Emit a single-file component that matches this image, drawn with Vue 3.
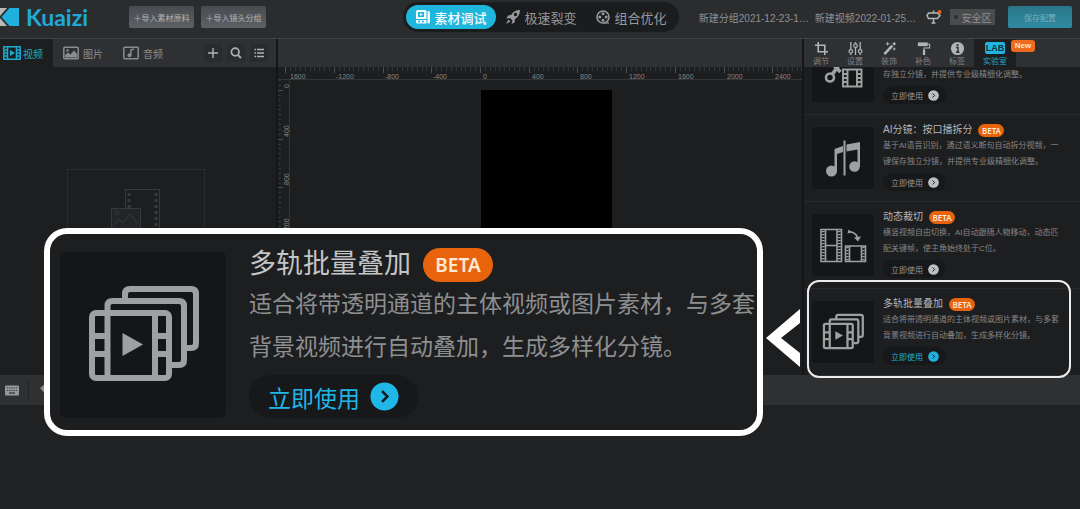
<script setup>
const modes = [
  { label: '素材调试', icon: 'm-debug', active: true },
  { label: '极速裂变', icon: 'm-rocket' },
  { label: '组合优化', icon: 'm-reel' },
]

const mediaTabs = [
  { label: '视频', icon: 't-video', active: true },
  { label: '图片', icon: 't-image' },
  { label: '音频', icon: 't-audio' },
]

const mediaTools = [
  { label: '添加', icon: 'b-plus' },
  { label: '搜索', icon: 'b-search' },
  { label: '列表', icon: 'b-list' },
]

const toolTabs = [
  { label: '调节', icon: 'p-crop' },
  { label: '设置', icon: 'p-sliders' },
  { label: '装饰', icon: 'p-wand' },
  { label: '补色', icon: 'p-roller' },
  { label: '标签', icon: 'p-info' },
]

const cards = [
  { icon: 'c-split', lines: ['存独立分镜，并提供专业级精细化调整。'] },
  {
    icon: 'c-music',
    title: 'AI分镜：按口播拆分',
    lines: ['基于AI语音识别，通过语义断句自动拆分视频，一', '键保存独立分镜，并提供专业级精细化调整。'],
  },
  {
    icon: 'c-resize',
    title: '动态裁切',
    lines: ['横竖视频自由切换，AI自动跟随人物移动，动态匹', '配关键帧，使主角始终处于C位。'],
  },
  {
    icon: 'c-stack',
    title: '多轨批量叠加',
    lines: ['适合将带透明通道的主体视频或图片素材，与多套', '背景视频进行自动叠加，生成多样化分镜。'],
    active: true,
  },
]

const STEP = 48.7
const hTicks = []
for (let i = -40; i <= 66; i++) {
  hTicks.push({ p: Math.round(202 + (i * STEP) / 10), major: i % 10 === 0 })
}
const hLabels = []
for (let k = -4; k <= 6; k++) {
  hLabels.push({ x: k === -4 ? 12 : Math.round(202 + k * STEP) + (k < 0 ? 2 : 3), t: k === -4 ? '1600' : String(k * 400) })
}
const vTicks = []
for (let i = -2; i <= 58; i++) {
  vTicks.push({ p: Math.round(10 + (i * STEP) / 10), major: i % 10 === 0 })
}
const vLabels = []
for (let k = 0; k <= 5; k++) vLabels.push({ y: Math.round(9 + k * STEP) - 1, t: String(k * 400) })
</script>

<template>
  <div class="app">
    <svg class="defs" aria-hidden="true">
      <symbol id="m-debug" viewBox="0 0 16 16">
        <path fill="currentColor" fill-rule="evenodd" d="M2.5 1H10a1.5 1.5 0 0 1 1.500 1.500V10H1V2.500A1.500 1.500 0 0 1 2.500 1zM3 3v5h6V3z" />
        <path fill="currentColor" d="M5 4l3 1.500L5 7zM1 11h10.500v3.500h-9A1.500 1.500 0 0 1 1 13zM12.500 2h1A1.500 1.500 0 0 1 15 3.500V13a1.500 1.500 0 0 1-1.500 1.500h-1z" />
        <circle cx="4" cy="12.500" r="1" fill="#1fb6dd" /><circle cx="8" cy="12.500" r="1" fill="#1fb6dd" />
      </symbol>
      <symbol id="m-rocket" viewBox="0 0 16 16">
        <path fill="currentColor" fill-rule="evenodd" d="M15 1c-4 0-7 1.500-9 5L3 6.500 1.500 9.500 5 9l2.500 2.500L6.500 15l3-1.500.5-3.500c3.500-2 5-5 5-9zM10.500 3.800a1.700 1.700 0 1 1 0 3.400 1.700 1.700 0 0 1 0-3.400z" />
        <path fill="currentColor" d="M3.500 10.500L1 15l4.500-2.500z" />
      </symbol>
      <symbol id="m-reel" viewBox="0 0 16 16">
        <circle cx="8" cy="8" r="6" fill="none" stroke="currentColor" stroke-width="1.600" />
        <circle cx="8" cy="4.800" r="1.500" fill="currentColor" /><circle cx="8" cy="11.200" r="1.500" fill="currentColor" />
        <circle cx="4.800" cy="8" r="1.500" fill="currentColor" /><circle cx="11.200" cy="8" r="1.500" fill="currentColor" />
        <path d="M9 14h5" stroke="currentColor" stroke-width="1.200" />
      </symbol>
      <symbol id="t-video" viewBox="0 0 18 14">
        <path d="M.8.8h16.400v12.400H.800zM4.500 1v12M13.500 1v12M1 4h3.500M1 7h3.500M1 10h3.500M13.500 4H17M13.500 7H17M13.500 10H17" fill="none" stroke="currentColor" stroke-width="1.500" />
        <path d="M7 4l5 3-5 3z" fill="currentColor" />
      </symbol>
      <symbol id="t-image" viewBox="0 0 16 14">
        <rect x=".8" y="1.300" width="14.400" height="11.400" rx="1" fill="none" stroke="currentColor" stroke-width="1.500" />
        <path d="M2 11.500V9l3-2.500 2.500 2 3.500-4 3 3.500v3.500z" fill="currentColor" /><circle cx="4.500" cy="4.500" r="1.200" fill="currentColor" />
      </symbol>
      <symbol id="t-audio" viewBox="0 0 16 14">
        <rect x=".8" y="1.300" width="14.400" height="11.400" rx="1" fill="none" stroke="currentColor" stroke-width="1.500" />
        <path d="M7.800 9V4l3-1" fill="none" stroke="currentColor" stroke-width="1.400" /><circle cx="6.500" cy="9.200" r="2" fill="currentColor" />
      </symbol>
      <symbol id="b-plus" viewBox="0 0 16 16"><path d="M8 3v10M3 8h10" stroke="currentColor" stroke-width="1.400" /></symbol>
      <symbol id="b-search" viewBox="0 0 16 16"><circle cx="7.200" cy="7" r="3.800" fill="none" stroke="currentColor" stroke-width="1.700" /><path d="M10 10l3 3.200" stroke="currentColor" stroke-width="1.900" /></symbol>
      <symbol id="b-list" viewBox="0 0 16 16"><path d="M6 4.500h7M6 8h7M6 11.500h7M3.500 4.500H5M3.500 8H5M3.500 11.500H5" stroke="currentColor" stroke-width="1.300" /></symbol>
      <symbol id="p-crop" viewBox="0 0 16 16"><path d="M4.500 1v10.500H15M1 4.500h10.500V15" fill="none" stroke="currentColor" stroke-width="1.700" /></symbol>
      <symbol id="p-sliders" viewBox="0 0 16 16">
        <path d="M3 1v8M3 13v2M8 1v2M8 7v8M13 1v8M13 13v2" stroke="currentColor" stroke-width="1.400" />
        <g fill="none" stroke="currentColor" stroke-width="1.300"><circle cx="3" cy="11" r="1.900" /><circle cx="8" cy="5" r="1.900" /><circle cx="13" cy="11" r="1.900" /></g>
      </symbol>
      <symbol id="p-wand" viewBox="0 0 16 16">
        <path d="M2.500 14L11 5" stroke="currentColor" stroke-width="2.800" /><path d="M12 4l2-2" stroke="currentColor" stroke-width="2.800" />
        <path d="M6 1v4M4 3h4M13 7v3M11.500 8.500h3" stroke="currentColor" stroke-width="1" />
      </symbol>
      <symbol id="p-roller" viewBox="0 0 16 16">
        <path d="M2 1.500h10.500v4H2z" fill="currentColor" /><path d="M12 3.500h2.500v4H8.500V10" fill="none" stroke="currentColor" stroke-width="1.200" /><path d="M7.300 9.500h2.500V15H7.300z" fill="currentColor" />
      </symbol>
      <symbol id="p-info" viewBox="0 0 16 16">
        <circle cx="8" cy="8" r="7" fill="currentColor" /><circle cx="8" cy="4.300" r="1.200" fill="#2f3033" /><path d="M6.500 7h2v5M6.300 12h3.800" fill="none" stroke="#2f3033" stroke-width="1.500" />
      </symbol>
      <symbol id="c-split" viewBox="0 0 62 62">
        <g fill="none" stroke="currentColor">
          <circle cx="18" cy="37.500" r="4" stroke-width="2.600" /><circle cx="18" cy="20" r="4" stroke-width="2.600" />
          <path d="M20.500 34l8-11M20.500 24l8 8" stroke-width="3.600" />
          <path d="M31 29.500h18.500v17H31zM35.500 30v16M45 30v16M31 34h4M31 38h4M31 42h4M45 34h4M45 38h4M45 42h4" stroke-width="1.900" />
        </g>
      </symbol>
      <symbol id="c-music" viewBox="0 0 62 62">
        <g fill="currentColor"><circle cx="19.500" cy="44" r="5.500" /><circle cx="42.500" cy="39.500" r="5.300" /><path d="M22.500 22l8.500-3v6l-6 2v17h-2.500zM34.500 17.500L48 15v25h-2.500V22.500l-11 2zM31.500 13.500h2v35h-2z" /></g>
      </symbol>
      <symbol id="c-resize" viewBox="0 0 62 62">
        <g fill="none" stroke="currentColor">
          <path d="M9 15.500h20.500v32H9zM13.500 16v31M25 16v31M13.500 31.500H25" stroke-width="1.600" />
          <path d="M11.300 17v30M27.300 17v30" stroke-width="2.800" stroke-dasharray="1.200 1.800" />
          <path d="M33.500 32h20v15.500h-20zM37.500 32v15.500M49.500 32v15.500" stroke-width="1.600" />
          <path d="M35.500 33v14M51.500 33v14" stroke-width="2.400" stroke-dasharray="1.200 1.800" />
          <path d="M37 17.500q7 1 8.500 6" stroke-width="1.700" />
        </g>
        <path d="M42 23.500l7-1-3 5zM35.500 19.500l1-4 3 3z" fill="currentColor" />
      </symbol>
      <symbol id="c-stack" viewBox="0 0 166 166">
        <g fill="none" stroke="currentColor" stroke-width="6">
          <rect x="32" y="61" width="77" height="65" rx="4" />
          <path d="M47.500 61v65M95 61v65M32 84h15M32 102h15M95 84h14M95 102h14" />
          <path d="M47.500 61v-7q0-5 5-5H119q5 0 5 5v54q0 5-5 5h-8" />
          <path d="M65 49v-7q0-5 5-5h61q5 0 5 5v49q0 5-5 5h-8" />
        </g>
        <path d="M62.500 81v23L83 92.500z" fill="currentColor" />
      </symbol>
      <symbol id="go" viewBox="0 0 30 30">
        <circle cx="15" cy="15" r="14.500" fill="currentColor" /><path d="M12.500 9.500l5.500 5.500-5.500 5.500" fill="none" stroke="#17181a" stroke-width="2.600" />
      </symbol>
    </svg>

    <header class="top">
      <div class="top-left">
        <div class="brand">
          <svg class="brand-mark" viewBox="0 0 20 18"><path d="M0 0h7L0 8zM0 10l7 8H0z" fill="#b9babb" /><path d="M9.500 0H19v18H9.500L1.500 9z" fill="#1fb0dd" /></svg>
          <span class="brand-name">Kuaizi</span>
        </div>
        <button class="import">＋导入素材原料</button>
        <button class="import">＋导入镜头分组</button>
      </div>
      <nav class="modes">
        <button v-for="m in modes" :key="m.label" class="mode" :class="{ on: m.active }">
          <svg><use :href="'#' + m.icon" /></svg>{{ m.label }}
        </button>
      </nav>
      <div class="top-right">
        <span class="crumb">新建分组2021-12-23-1…</span>
        <span class="crumb">新建视频2022-01-25…</span>
        <svg class="sign" viewBox="0 0 16 16"><path d="M2.500 4h9l2.500 2.500-2.500 3h-9l-1.500-3zM7.500 1.500V4M7.500 9.500V14M5.500 14h4" fill="none" stroke="#b4b5b6" stroke-width="1.500" /><circle cx="13.500" cy="3" r="2" fill="#e0661c" /></svg>
        <button class="safe"><i></i>安全区</button>
        <button class="save">保存配置</button>
      </div>
    </header>

    <main class="work">
      <section class="media">
        <div class="bar media-bar">
          <button v-for="t in mediaTabs" :key="t.label" class="media-tab" :class="{ on: t.active }">
            <svg><use :href="'#' + t.icon" /></svg>{{ t.label }}
          </button>
          <div class="media-tools">
            <button v-for="b in mediaTools" :key="b.icon" :aria-label="b.label"><svg><use :href="'#' + b.icon" /></svg></button>
          </div>
        </div>
        <div class="media-body">
          <div class="drop">
            <svg viewBox="0 0 52 64" fill="none" stroke="#37393b">
              <path d="M15.500 22V1.500h34v40H33" />
              <path d="M19 5v16M46 5v36" stroke-width="3" stroke-dasharray="3 3" />
              <rect x="1.500" y="20.500" width="29" height="22" fill="#222427" /><path d="M3 38l6-7 4 4 7-9 8 10" /><circle cx="7" cy="25" r="2" />
            </svg>
          </div>
        </div>
      </section>

      <section class="stage">
        <div class="bar"></div>
        <svg class="ruler-h">
          <rect v-for="t in hTicks" :key="t.p" :x="t.p" y="0" width="1" :height="t.major ? 6 : 4" :fill="t.major ? '#4c4e51' : '#353638'" />
          <text v-for="l in hLabels" :key="l.t" :x="l.x" y="12">{{ l.t }}</text>
        </svg>
        <div class="stage-row">
          <svg class="ruler-v">
            <rect v-for="t in vTicks" :key="t.p" x="0" :y="t.p" :width="t.major ? 5 : 3" height="1" :fill="t.major ? '#4c4e51' : '#353638'" />
            <text v-for="l in vLabels" :key="l.t" :transform="`translate(11 ${l.y}) rotate(-90)`">{{ l.t }}</text>
          </svg>
          <div class="canvas-area"><div class="canvas"></div></div>
        </div>
      </section>

      <section class="lab">
        <div class="bar tool-bar">
          <button v-for="t in toolTabs" :key="t.label" class="tool"><svg><use :href="'#' + t.icon" /></svg>{{ t.label }}</button>
          <button class="tool on"><span class="lab-mark">LAB</span>实验室</button>
          <span class="new">New</span>
        </div>
        <div class="list">
          <article v-for="c in cards" :key="c.icon" class="card" :class="{ on: c.active }">
            <div class="thumb"><svg><use :href="'#' + c.icon" /></svg></div>
            <div class="card-body">
              <h3 v-if="c.title">{{ c.title }}<span class="beta">BETA</span></h3>
              <p v-for="l in c.lines" :key="l">{{ l }}</p>
              <button class="use">立即使用<svg><use href="#go" /></svg></button>
            </div>
          </article>
        </div>
      </section>
    </main>

    <div class="timeline-bar">
      <svg class="keyboard" viewBox="0 0 14 11"><rect width="14" height="10" y=".5" rx="1" fill="#97989a" /><path d="M2 3h10M2 5.500h10" stroke="#2f3133" stroke-width="1.200" stroke-dasharray="1.200 1" /><path d="M4 8h6" stroke="#2f3133" stroke-width="1.200" /></svg>
      <span class="sep"></span>
      <svg class="undo" viewBox="0 0 12 12"><path d="M0 4l5-4v3q6 0 6 8-2-4-6-4v3z" fill="#8b8c8e" /></svg>
    </div>

    <div class="focus"></div>
    <svg class="pointer" viewBox="0 0 34 58"><path d="M0 29L34 0v14L15 29l19 15v14z" fill="#fff" /></svg>
    <aside class="callout">
      <div class="thumb"><svg><use href="#c-stack" /></svg></div>
      <div class="callout-body">
        <h2>多轨批量叠加<span class="beta">BETA</span></h2>
        <p>适合将带透明通道的主体视频或图片素材，与多套</p>
        <p>背景视频进行自动叠加，生成多样化分镜。</p>
        <button class="use">立即使用<svg><use href="#go" /></svg></button>
      </div>
    </aside>
  </div>
</template>

<style>
body { margin: 0; background: #202123; }
</style>

<style scoped>
.app {
  position: relative;
  min-height: 100vh;
  overflow: hidden;
  background: #202123;
  color: #8b8c8e;
  font-family: "Liberation Sans", "Noto Sans CJK SC", sans-serif;
  font-size: 10px;
}
.app * { box-sizing: border-box; }
.defs { position: absolute; width: 0; height: 0; }
button { margin: 0; padding: 0; border: 0; background: none; color: inherit; font: inherit; white-space: nowrap; }
svg { display: block; flex: none; }
h2, h3, p { margin: 0; font-weight: 400; white-space: nowrap; }

.top {
  display: grid;
  grid-template-columns: 1fr auto 1fr;
  align-items: center;
  height: 39px;
  padding: 0 8px 4px 10px;
  border-bottom: 1px solid #414244;
  background: #2b2c2e;
}
.top-left { display: flex; align-items: center; gap: 7px; margin-left: -10px; }
.brand { display: flex; align-items: center; gap: 6px; width: 122px; }
.brand-mark { width: 20px; height: 18px; }
.brand-name { color: #1fa9d6; font: 700 23px/24px Lato, sans-serif; }
.import {
  width: 65px; height: 22px; border-radius: 2px;
  background: linear-gradient(#484c50, #5d6165);
  color: #b3b4b6; font-size: 8px;
}
.modes { display: flex; padding: 3px; border-radius: 15px; background: #1b1c1e; }
.mode {
  display: flex; align-items: center; justify-content: center; gap: 3px;
  width: 90px; height: 24px; border-radius: 12px; color: #98999b; font-size: 13px;
}
.mode svg { width: 16px; height: 16px; }
.mode.on { background: #1fb6dd; color: #f4fbfd; font-weight: 500; }
.top-right { display: flex; align-items: center; justify-content: flex-end; }
.crumb { margin-right: 6px; color: #909193; }
.sign { width: 16px; height: 16px; margin: 0 8px 0 4px; }
.safe {
  display: flex; align-items: center; justify-content: center; gap: 4px;
  width: 45px; height: 16px; margin-right: 13px; background: #4a4b4d; color: #909193;
}
.safe i { width: 4px; height: 4px; border-radius: 2px; background: #2c2d2f; }
.save { width: 64px; height: 22px; border-radius: 2px; background: linear-gradient(#2b7688, #2f8ba1); color: #79aebb; font-size: 8px; }

.work { display: grid; grid-template-columns: 278px 1fr 278px; height: 336px; }
.work > section { display: flex; flex-direction: column; min-width: 0; min-height: 0; background: #1d1e20; }
.bar { flex: none; height: 28px; background: #2f3033; }
.media { border-right: 2px solid #141517; }
.media-bar { display: flex; }
.media-tab { display: flex; align-items: center; gap: 4px; width: 60px; padding-left: 10px; }
.media-tab svg { width: 16px; height: 14px; }
.media-tab.on { width: 53px; padding-left: 3px; gap: 2px; background: #1d1e20; color: #1fa9d0; }
.media-tab.on svg { width: 18px; }
.media-tools { display: flex; align-items: center; gap: 5px; margin: 0 8px 0 auto; }
.media-tools button { width: 18px; height: 18px; padding: 1px; background: #2a2b2d; color: #b0b1b3; }
.media-tools svg { width: 16px; height: 16px; }
.media-body { display: flex; flex: 1; align-items: center; justify-content: center; padding-right: 5px; }
.drop { display: flex; justify-content: center; width: 138px; height: 104px; padding-top: 18px; border: 1px solid #2b2c2e; }
.drop svg { width: 52px; height: 64px; }

.ruler-h { width: 100%; height: 13px; border-bottom: 1px solid #343537; }
.ruler-h text, .ruler-v text { fill: #85878a; font-size: 7px; }
.stage-row { display: flex; flex: 1; min-height: 0; }
.ruler-v { width: 12px; height: 100%; border-right: 1px solid #343537; }
.canvas-area { display: flex; flex: 1; justify-content: center; padding-top: 10px; overflow: hidden; }
.canvas { width: 131px; height: 233px; background: #000; }

.lab { border-left: 2px solid #141517; }
.tool-bar { position: relative; display: flex; }
.tool { display: flex; flex-direction: column; align-items: center; gap: 1px; width: 34px; padding-top: 2px; font-size: 8px; line-height: 10px; color: #808183; }
.tool svg { width: 15px; height: 15px; color: #b2b3b5; }
.tool.on { width: 42px; background: #1d1e20; color: #1fa9d0; }
.lab-mark { width: 20px; height: 12px; margin: 1px 0 2px; border-radius: 2px; background: #22b4e0; color: #14323d; font: 700 9px/12px "Liberation Sans", sans-serif; text-align: center; }
.new {
  position: absolute; left: 207px; top: 1px; width: 24px; height: 12px;
  border-radius: 3px; background: #ee6a1c; color: #ffe3cf; font-size: 8px; font-weight: 700; line-height: 12px; text-align: center;
}
.list { display: flex; flex: 1; flex-direction: column; justify-content: flex-end; min-height: 0; overflow: hidden; }
.card { display: flex; flex: none; gap: 9px; height: 87px; padding: 0 0 10px 8px; border-top: 1px solid #29292b; }
.thumb { flex: none; border-radius: 3px; background: #151617; color: #9fa0a1; }
.card .thumb { width: 62px; height: 62px; margin-top: 12px; }
.thumb svg { width: 100%; height: 100%; }
.card-body { display: flex; flex-direction: column; justify-content: flex-end; }
h3 { display: flex; align-items: center; gap: 6px; margin-bottom: 1px; color: #b6b7b8; font-size: 10px; line-height: 14px; }
.beta { border-radius: 17px; background: #e8640c; color: #ffe8d6; font-family: "Noto Sans", sans-serif; font-weight: 600; text-align: center; }
.card .beta { width: 26px; height: 13px; font-size: 8px; line-height: 13px; }
.card p { font-size: 8px; line-height: 16px; color: #858688; }
.use { display: flex; align-items: center; align-self: flex-start; background: #17181a; }
.card .use { gap: 5px; height: 18px; margin-top: 3px; padding: 0 7px 0 8px; border-radius: 9px; font-size: 8px; color: #97989a; }
.card .use svg { width: 11px; height: 11px; color: #bdbebf; }
.card.on .use, .card.on .use svg { color: #1fb0dd; }

.timeline-bar { display: flex; align-items: center; height: 30px; padding-left: 5px; background: #2e3032; }
.keyboard { width: 14px; height: 11px; }
.sep { width: 1px; height: 18px; margin: 0 11px 0 9px; background: #222325; }
.undo { width: 12px; height: 12px; }

.focus { position: absolute; top: 280px; right: 9px; width: 264px; height: 98px; border: 2px solid #ececec; border-radius: 12px; }
.pointer { position: absolute; top: 309px; right: 280px; width: 34px; height: 58px; }
.callout {
  position: absolute; top: 228px; left: 44px; right: 317px;
  display: flex; gap: 23px; padding: 18px 0 12px 10px;
  border: 6px solid #fff; border-radius: 23px; background: #1d1e20; overflow: hidden;
}
.callout .thumb { width: 166px; height: 166px; border-radius: 6px; }
.callout-body { display: flex; flex-direction: column; margin-top: -6px; }
h2 { display: flex; align-items: center; gap: 12px; color: #c4c5c6; font-size: 27px; line-height: 37px; }
.callout .beta { width: 70px; height: 34px; font-size: 19px; line-height: 34px; }
.callout p { font-size: 23px; line-height: 43px; color: #8e8f90; }
.callout .use { gap: 10px; height: 43px; margin-top: 6px; padding: 0 19px; border-radius: 22px; color: #1fb6e8; font-size: 23px; }
.callout .use svg { width: 29px; height: 29px; }
</style>
